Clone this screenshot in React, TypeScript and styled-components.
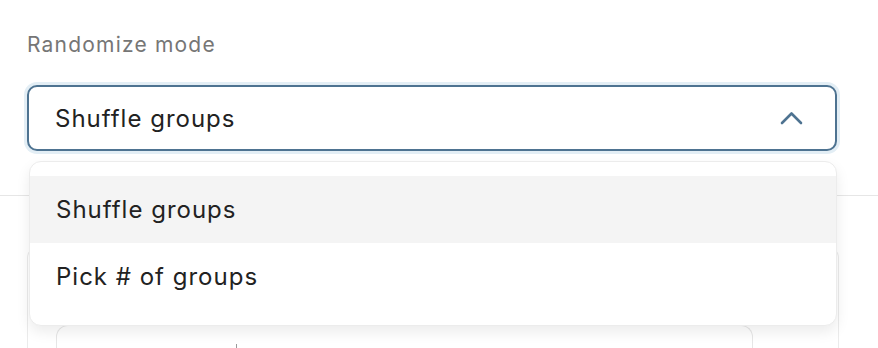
import React from "react";
import styled, { createGlobalStyle } from "styled-components";

const GlobalStyle = createGlobalStyle`
    html, body {
        margin:0;
        padding:0;
        background:#ffffff;
    }
    body {
        font-family: Inter, "Noto Sans", Arial, sans-serif;
        color:#222222;
        overflow:hidden;
    }
`;

const Page = styled.div`
    position:relative;
    width:878px;
    height:348px;
    overflow:hidden;
`;

const Header = styled.div`
    padding:31px 41px 0 27px;
    height:164px;
    border-bottom:1px solid #e6e6e6;
    box-sizing:content-box;
`;

const Field = styled.div`
    position:relative;
`;

const Label = styled.div`
    font-size:21px;
    line-height:28px;
    color:#767676;
    letter-spacing:1.2px;
`;

const Trigger = styled.button`
    margin-top:26px;
    display:flex;
    align-items:center;
    justify-content:space-between;
    width:810px;
    height:66px;
    padding:0 32px 0 26px;
    box-sizing:border-box;
    border:2px solid #4e7391;
    border-radius:10px;
    background:#ffffff;
    box-shadow:0 0 0 3px #e3eef5;
    font-family:inherit;
    font-size:24px;
    letter-spacing:1px;
    color:#222222;
    cursor:pointer;
`;

const Menu = styled.ul`
    position:absolute;
    left:2px;
    top:130px;
    width:808px;
    margin:0;
    padding:14px 0 15px;
    list-style:none;
    box-sizing:border-box;
    background:#ffffff;
    border:1px solid #ececec;
    border-radius:12px;
    box-shadow:0 6px 14px rgba(0,0,0,0.08);
    z-index:2;
`;

const Item = styled.li<{ $active?: boolean }>`
    height:67px;
    display:flex;
    align-items:center;
    padding-left:26px;
    font-size:24px;
    letter-spacing:1px;
    color:#222222;
    background:${p => (p.$active ? "#f4f4f4" : "transparent")};
`;

const Panel = styled.div`
    margin:50px 39px 0 27px;
    height:200px;
    border:1px solid #ebebeb;
    border-bottom:none;
    border-radius:12px 12px 0 0;
    padding:78px 0 0 28px;
    box-sizing:border-box;
`;

const InnerCard = styled.div`
    position:relative;
    width:695px;
    height:100px;
    border:1px solid #e6e6e6;
    border-bottom:none;
    border-radius:12px 12px 0 0;
`;

const Tick = styled.span`
    position:absolute;
    left:179px;
    top:18px;
    width:1px;
    height:12px;
    background:#9a9a9a;
`;

const Chevron = () => (
    <svg width="24" height="14" viewBox="0 0 24 14" fill="none">
        <path d="M3 12 L12.5 2.5 L22 12" stroke="#4e7391" strokeWidth="2.6" strokeLinecap="round" strokeLinejoin="round" />
    </svg>
);

const App = () => {
    return (
        <Page>
            <GlobalStyle />
            <Header>
                <Field>
                    <Label>Randomize mode</Label>
                    <Trigger>
                        <span>Shuffle groups</span>
                        <Chevron />
                    </Trigger>
                    <Menu>
                        <Item $active>Shuffle groups</Item>
                        <Item>Pick # of groups</Item>
                    </Menu>
                </Field>
            </Header>
            <Panel>
                <InnerCard>
                    <Tick />
                </InnerCard>
            </Panel>
        </Page>
    );
};

export default App;
